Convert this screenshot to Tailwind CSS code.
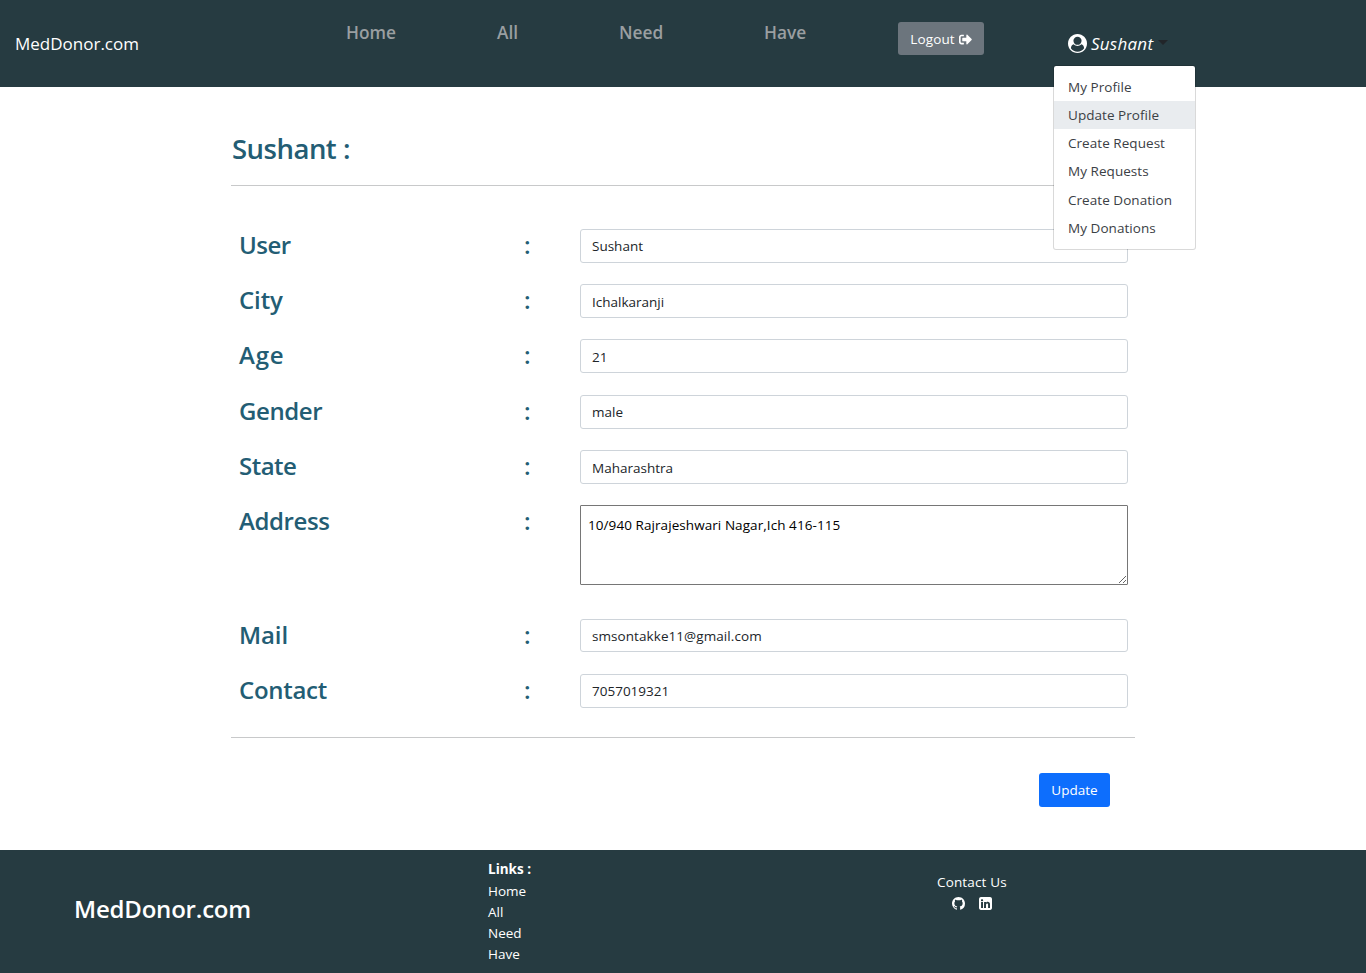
<!DOCTYPE html>
<html lang="en">
<head>
<meta charset="utf-8">
<title>MedDonor.com</title>
<script src="https://cdn.jsdelivr.net/npm/@tailwindcss/browser@4"></script>
</head>
<body class="flex h-[973px] w-[1366px] flex-col overflow-hidden bg-white font-['Open_Sans','Noto_Sans',sans-serif] text-[13.5px] leading-[21px] text-[#212529]">
<header class="flex h-[87px] shrink-0 items-start bg-[#263b41]">
  <a class="ml-[14px] mt-[33px] w-[332px] pl-px text-[17px] text-white">MedDonor.com</a>
  <nav class="mt-[22px] flex w-[552px] text-[17.3px] font-semibold text-[#9a9fa1]">
    <a class="w-[151px]">Home</a><a class="w-[122px]">All</a><a class="w-[145px]">Need</a><a>Have</a>
  </nav>
  <button class="mt-[22px] flex h-[33px] w-[86px] items-center justify-center gap-1 rounded-[3px] bg-[#6c757d] pt-px text-white">
    <span class="tracking-[0.15px]">Logout</span>
    <svg class="h-[13px] w-[13px]" viewBox="0 0 512 512" fill="currentColor"><path d="M497 273L329 441c-15 15-41 4.500-41-17v-96H152c-13.300 0-24-10.700-24-24v-96c0-13.300 10.700-24 24-24h136V88c0-21.400 25.900-32 41-17l168 168c9.300 9.400 9.300 24.600 0 34zM192 436v-40c0-6.600-5.400-12-12-12H96c-17.700 0-32-14.300-32-32V160c0-17.700 14.300-32 32-32h84c6.600 0 12-5.400 12-12V76c0-6.600-5.400-12-12-12H96c-53 0-96 43-96 96v192c0 53 43 96 96 96h84c6.600 0 12-5.400 12-12z"/></svg>
  </button>
  <div class="relative ml-[70px] mt-[33px] h-[21px] w-[142px] pl-[14px]">
    <div class="flex items-center text-[17px] italic text-white">
      <svg class="mr-1 h-[19px] w-[19px]" viewBox="0 0 1792 1792" fill="currentColor"><path d="M1523 1339q-22-155-87.5-257.500t-184.500-118.500q-67 74-159.500 115.500t-195.500 41.500-195.500-41.500-159.500-115.500q-119 16-184.500 118.500t-87.500 257.500q106 150 271 237.500t356 87.500 356-87.500 271-237.500zm-243-699q0-159-112.500-271.500t-271.500-112.500-271.500 112.500-112.500 271.500 112.500 271.500 271.500 112.500 271.500-112.500 112.500-271.500zm512 256q0 182-71 347.500t-190.500 286-285.500 191.500-349 71q-182 0-348-71t-286-191-191-286-71-348 71-348 191-286 286-191 348-71 348 71 286 191 191 286 71 348z"/></svg>
      <span class="w-[67px] tracking-[0.25px]">Sushant</span>
      <span class="mb-[2px] border-x-[5px] border-t-[5px] border-x-transparent border-t-[#212529]"></span>
    </div>
    <ul class="absolute left-[-1px] top-[32px] z-10 h-[185px] w-[143px] rounded-[3px] border border-black/15 bg-white bg-clip-padding pt-[7px] tracking-[0.05px] text-[#3b4045]">
      <li class="h-[28px] pl-[14px] leading-[28px]">My Profile</li>
      <li class="h-[28px] bg-[#e9ecef] pl-[14px] leading-[28px]">Update Profile</li>
      <li class="h-[28px] pl-[14px] leading-[28px]">Create Request</li>
      <li class="h-[28px] pl-[14px] leading-[28px]">My Requests</li>
      <li class="mt-px h-[28px] pl-[14px] leading-[28px]">Create Donation</li>
      <li class="h-[28px] pl-[14px] leading-[28px]">My Donations</li>
    </ul>
  </div>
</header>
<main class="ml-[231px] w-[904px] grow">
  <h1 class="h-[99px] border-b border-[#c8c9ca] pl-px pt-[44px] text-[27.5px] font-semibold leading-[36px] tracking-[-0.5px] text-[#235d74]">Sushant :</h1>
  <form class="h-[552px] border-b border-[#c8c9ca] pl-[7px] pt-[43px]">
    <div class="flex h-[55px]"><label class="w-[286px] pl-px text-[24px] font-semibold leading-[31px] tracking-[-0.5px] text-[#235d74]">User</label><span class="w-[56px] text-[24px] font-semibold leading-[31px] text-[#235d74]">:</span><input class="h-[34px] w-[548px] rounded-[3px] border border-[#ced4da] px-[11px]" value="Sushant"></div>
    <div class="flex h-[55px]"><label class="w-[286px] pl-px text-[24px] font-semibold leading-[31px] tracking-[-0.1px] text-[#235d74]">City</label><span class="w-[56px] text-[24px] font-semibold leading-[31px] text-[#235d74]">:</span><input class="h-[34px] w-[548px] rounded-[3px] border border-[#ced4da] px-[11px] pt-[2px]" value="Ichalkaranji"></div>
    <div class="flex h-[56px]"><label class="w-[286px] pl-px text-[24px] font-semibold leading-[31px] tracking-[0.8px] text-[#235d74]">Age</label><span class="w-[56px] text-[24px] font-semibold leading-[31px] text-[#235d74]">:</span><input class="h-[34px] w-[548px] rounded-[3px] border border-[#ced4da] px-[11px] pt-[2px]" value="21"></div>
    <div class="flex h-[55px]"><label class="w-[286px] pl-px text-[24px] font-semibold leading-[31px] tracking-[-0.4px] text-[#235d74]">Gender</label><span class="w-[56px] text-[24px] font-semibold leading-[31px] text-[#235d74]">:</span><input class="h-[34px] w-[548px] rounded-[3px] border border-[#ced4da] px-[11px]" value="male"></div>
    <div class="flex h-[55px]"><label class="w-[286px] pl-px text-[24px] font-semibold leading-[31px] tracking-[-0.5px] text-[#235d74]">State</label><span class="w-[56px] text-[24px] font-semibold leading-[31px] text-[#235d74]">:</span><input class="h-[34px] w-[548px] rounded-[3px] border border-[#ced4da] px-[11px] pt-[2px]" value="Maharashtra"></div>
    <div class="flex h-[114px]"><label class="w-[286px] pl-px text-[24px] font-semibold leading-[31px] tracking-[-0.4px] text-[#235d74]">Address</label><span class="w-[56px] text-[24px] font-semibold leading-[31px] text-[#235d74]">:</span><textarea class="h-[80px] w-[548px] resize rounded-[1px] border border-[#767676] px-[7px] pt-[9px] tracking-[0.07px] text-black">10/940 Rajrajeshwari Nagar,Ich 416-115</textarea></div>
    <div class="flex h-[55px]"><label class="w-[286px] pl-px text-[24px] font-semibold leading-[31px] tracking-[-0.1px] text-[#235d74]">Mail</label><span class="w-[56px] text-[24px] font-semibold leading-[31px] text-[#235d74]">:</span><input class="h-[33px] w-[548px] rounded-[3px] border border-[#ced4da] px-[11px] tracking-[0.07px]" value="smsontakke11@gmail.com"></div>
    <div class="flex h-[55px]"><label class="w-[286px] pl-px text-[24px] font-semibold leading-[31px] tracking-[-0.3px] text-[#235d74]">Contact</label><span class="w-[56px] text-[24px] font-semibold leading-[31px] text-[#235d74]">:</span><input class="h-[34px] w-[548px] rounded-[3px] border border-[#ced4da] px-[11px]" value="7057019321"></div>
  </form>
  <div class="flex justify-end pr-[25px] pt-[35px]">
    <button class="h-[34px] w-[71px] rounded-[3px] bg-[#0d6efd] text-white">Update</button>
  </div>
</main>
<footer class="flex h-[123px] shrink-0 bg-[#263b41] text-white">
  <h2 class="ml-[74px] mt-[42px] w-[414px] text-[24px] font-semibold leading-[33px] tracking-[-0.2px]">MedDonor.com</h2>
  <ul class="mt-[9px] w-[449px]">
    <li class="font-bold">Links :</li><li class="pt-px">Home</li><li>All</li><li>Need</li><li>Have</li>
  </ul>
  <div class="mt-[22px]">
    <p class="tracking-[0.15px]">Contact Us</p>
    <div class="ml-[15px] mt-[4px] flex gap-[14px]">
      <svg class="h-[13px] w-[13px]" viewBox="0 0 16 16" fill="currentColor"><path d="M8 0C3.580 0 0 3.580 0 8c0 3.540 2.290 6.530 5.470 7.590.4.070.55-.17.55-.38 0-.19-.01-.82-.01-1.490-2.010.37-2.530-.49-2.690-.94-.09-.23-.48-.94-.82-1.130-.28-.15-.68-.52-.01-.53.63-.01 1.080.58 1.230.82.72 1.210 1.870.87 2.330.66.070-.52.28-.87.51-1.070-1.780-.2-3.640-.89-3.640-3.950 0-.87.31-1.590.82-2.150-.08-.2-.36-1.020.08-2.120 0 0 .67-.21 2.200.82.64-.18 1.320-.27 2-.27s1.360.09 2 .27c1.530-1.040 2.200-.82 2.200-.82.44 1.100.16 1.920.08 2.120.51.56.82 1.270.82 2.150 0 3.070-1.870 3.750-3.650 3.950.29.25.54.73.54 1.480 0 1.070-.01 1.930-.01 2.200 0 .21.15.46.55.38A8.010 8.010 0 0 0 16 8c0-4.420-3.580-8-8-8z"/></svg>
      <svg class="h-[13px] w-[13px] rounded-[2px]" viewBox="0 0 16 16" fill="currentColor"><path d="M0 1.146C0 .513.526 0 1.175 0h13.650C15.474 0 16 .513 16 1.146v13.708c0 .633-.526 1.146-1.175 1.146H1.175C.526 16 0 15.487 0 14.854V1.146zm4.943 12.248V6.169H2.542v7.225h2.401zm-1.200-8.212c.837 0 1.358-.554 1.358-1.248-.015-.709-.520-1.248-1.342-1.248-.822 0-1.359.540-1.359 1.248 0 .694.521 1.248 1.327 1.248h.016zm4.908 8.212V9.359c0-.216.016-.432.080-.586.173-.431.568-.878 1.232-.878.869 0 1.216.662 1.216 1.634v3.865h2.401V9.250c0-2.220-1.184-3.252-2.764-3.252-1.274 0-1.845.700-2.165 1.193v.025h-.016l.016-.025V6.169h-2.400c.030.678 0 7.225 0 7.225h2.400z"/></svg>
    </div>
  </div>
</footer>
</body>
</html>
